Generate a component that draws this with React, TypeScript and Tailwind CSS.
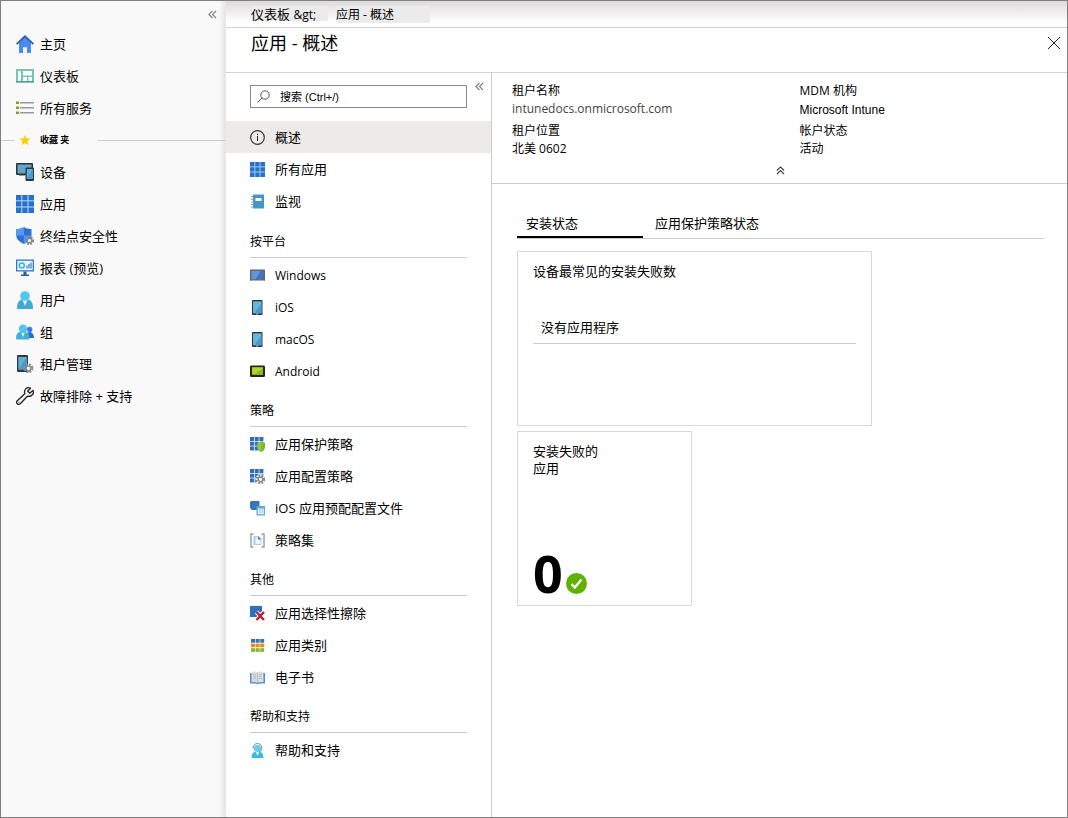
import { ReactNode } from 'react';

/* ---------- ICONS ---------- */

const GRID = [0, 1, 2];

const HomeIcon = () => (
    <svg viewBox="0 0 18 18" className="w-[18px] h-[18px]" aria-hidden="true">
        <path d="M3 7.5 9 2l6 5.5V18h-4v-5.5H7V18H3z" fill="#4a8ceb" />
        <path d="M9 0 0 8.6l1.2 1.2L9 2.6l7.8 7.2L18 8.6z" fill="#2560b0" />
        <path d="M7 12.5h4V18H7z" fill="#f0f0f0" />
    </svg>
);

const DashboardIcon = () => (
    <svg viewBox="0 0 18 18" className="w-[18px] h-[18px]" aria-hidden="true">
        <path d="M0 2h18v13.5H0z" fill="#76c5b2" />
        <path d="M0 14h18v1.5H0z" fill="#4e9f8e" />
        <path d="M2 4h3v10H2zM7 4h9v4.5H7zM7 10h4v4H7zM12.5 10H16v4h-3.5z" fill="#fff" />
    </svg>
);

const ListIcon = () => (
    <svg viewBox="0 0 18 18" className="w-[18px] h-[18px]" aria-hidden="true">
        <path d="M4 3h14v1.6H4zM4 8h14v1.6H4zM4 13h14v1.6H4z" fill="#999" />
        <path d="M0 2.4h3v2.7H0zM0 7.4h3v2.7H0zM0 12.4h3v2.7H0z" fill="#76a822" />
    </svg>
);

const StarIcon = () => (
    <svg viewBox="0 0 12 12" className="w-3 h-3" aria-hidden="true">
        <path d="M6 .5 7.5 4.4l4 .2-3.1 2.6 1 4.1L6 9.1 2.6 11.3l1-4.1L.5 4.6l4-.2z" fill="#fccf00" />
    </svg>
);

const DevicesIcon = () => (
    <svg viewBox="0 0 18 18" className="w-[18px] h-[18px]" aria-hidden="true">
        <rect x="0" y="0" width="17" height="12" rx="1" fill="#2f3236" />
        <path d="M1.5 1.5h14v9h-14z" fill="#63a4cf" />
        <path d="M3 12h6v1H3z" fill="#999" />
        <rect x="9.5" y="4.5" width="8.5" height="13.5" rx="1" fill="#2f3236" />
        <path d="M10.8 6h6v10h-6z" fill="#5fb3dc" />
        <path d="M16.8 6v10h-6z" fill="#4b9ccb" />
    </svg>
);

const GridIcon = ({ className }: { className: string }) => (
    <svg viewBox="0 0 18 18" className={className} aria-hidden="true">
        <path d="M0 0h18v18H0z" fill="#2672cb" />
        <path d="M5.8 0v18M12 0v18M0 5.8h18M0 12h18" stroke="#b8d8f5" />
    </svg>
);

const Gear = ({ x, y, r }: { x: number; y: number; r: number }) => (
    <g>
        <circle cx={x} cy={y} r={r} fill="none" stroke="#85898d" strokeWidth="2.2" strokeDasharray="1.8 1.2" />
        <circle cx={x} cy={y} r={r - 1.4} fill="#f8f8f8" stroke="#85898d" strokeWidth="1.4" />
    </g>
);

const ShieldIcon = () => (
    <svg viewBox="0 0 18 18" className="w-[18px] h-[18px]" aria-hidden="true">
        <path d="M8 0c2 1.5 4.5 2 7.5 2v6.5C15.5 12.5 12 15 8 17 4 15 .3 12.5.3 8.5V2C3.5 2 6 1.5 8 0z" fill="#2f6fd8" />
        <path d="M8 0v8.5H.3V2C3.5 2 6 1.5 8 0zM8 8.5h7.5C15.5 12.5 12 15 8 17z" fill="#5599f2" />
        <Gear x={13.5} y={13.5} r={3.6} />
    </svg>
);

const ReportIcon = () => (
    <svg viewBox="0 0 18 18" className="w-[18px] h-[18px]" aria-hidden="true">
        <path d="M0 .5h18v12H0z" fill="#2b78cf" />
        <path d="M1.3 1.8h15.4v9.4H1.3z" fill="#f1f8fe" />
        <circle cx="5.8" cy="6.5" r="2.5" fill="none" stroke="#35b6df" strokeWidth="1.6" />
        <path d="M11 6.5v3M13 5v4.5M15 3.5v6" stroke="#3c83d6" strokeWidth="1.3" />
        <path d="M7.5 12.5h3v3H13V17H5v-1.5h2.5z" fill="#255f9f" />
    </svg>
);

const UserIcon = () => (
    <svg viewBox="0 0 18 18" className="w-[18px] h-[18px]" aria-hidden="true">
        <path d="M1 17.5C1 12 3 9 6 8.5h6c3 .5 5 3.5 5 9 0 .5-.5.5-1 .5H2c-.5 0-1 0-1-.5z" fill="#41a9d3" />
        <path d="M6.5 9h5L9 15z" fill="#e3f5fb" />
        <circle cx="9" cy="5" r="4.8" fill="#50c7ea" />
    </svg>
);

const GroupIcon = () => (
    <svg viewBox="0 0 18 18" className="w-[18px] h-[18px]" aria-hidden="true">
        <path d="M10 15c0-4 1.5-6 3.5-6S18 11 18 15z" fill="#2b6bd0" />
        <circle cx="13.7" cy="6.5" r="2.7" fill="#3a7be0" />
        <path d="M0 15.500C0 11.500 1.500 9 4.500 9h5c3 .5 4 3 4 6.500 0 .6-.5 1-1 1H.5z" fill="#3fb0d8" />
        <path d="M5 9.5h4L7 14z" fill="#e3f5fb" />
        <circle cx="7" cy="5.7" r="4.2" fill="#50c7ea" />
    </svg>
);

const TenantIcon = () => (
    <svg viewBox="0 0 18 18" className="w-[18px] h-[18px]" aria-hidden="true">
        <rect x="1" y="0" width="11" height="17" rx="1" fill="#34383c" />
        <path d="M2.3 2h8.4v12.5H2.3z" fill="#61b0d6" />
        <path d="M10.7 2v12.5H2.3z" fill="#4d9ac6" />
        <Gear x={12.5} y={13.3} r={3.8} />
    </svg>
);

const WrenchIcon = () => (
    <svg viewBox="0 0 18 18" className="w-[18px] h-[18px]" aria-hidden="true">
        <path
            d="M16.8 3.4 13.9 6.2 11.7 4.2l2.800-3C12.3.2 10 1 9 3c-.6 1.300-.6 2.500-.2 3.700L1.300 13.800c-.9.9-.9 2.100-.1 2.900s2.100.8 3 0l7.200-7.500c1.300.3 2.700.2 3.900-.6C17.200 7.500 17.800 5.300 16.800 3.400z"
            fill="none"
            stroke="#222"
            strokeWidth="1.3"
            strokeLinejoin="round"
        />
        <circle cx="3" cy="15" r=".6" fill="#222" />
    </svg>
);

const InfoIcon = () => (
    <svg viewBox="0 0 15 15" className="w-[15px] h-[15px]" aria-hidden="true">
        <circle cx="7.5" cy="7.5" r="6.8" fill="none" stroke="#333" strokeWidth="1.2" />
        <path d="M7 6h1v5H7zM7 3.8h1V5H7z" fill="#222" />
    </svg>
);

const NotebookIcon = () => (
    <svg viewBox="0 0 15 15" className="w-[15px] h-[15px]" aria-hidden="true">
        <path d="M3 .5h11v14H3z" fill="#4496c8" />
        <path d="M1 2h3v1H1zM1 4.7h3v1H1zM1 7.400h3v1H1zM1 10.100h3v1H1zM1 12.600h3v1H1z" fill="#8d9ba5" />
        <path d="M5.5 4h6v3h-6z" fill="#fff" />
    </svg>
);

const MonitorIcon = () => (
    <svg viewBox="0 0 15 15" className="w-[15px] h-[15px]" aria-hidden="true">
        <rect x="0" y="1.5" width="15" height="11.5" rx=".6" fill="#63676c" />
        <path d="M1.5 3h12v8.3h-12z" fill="#3c78c2" />
        <path d="M1.5 3h9l-5 8.3h-4z" fill="#6398d4" />
        <path d="M.5 12h14v1H.5z" fill="#a9adb2" />
    </svg>
);

const PhoneIcon = () => (
    <svg viewBox="0 0 15 15" className="w-[15px] h-[15px]" aria-hidden="true">
        <rect x="2" y="0" width="10.5" height="15" rx=".8" fill="#2e3134" />
        <path d="M3 1.3h8.5v12H3z" fill="#68b6de" />
        <path d="M11.5 3v10.3H4z" fill="#4a9ccf" />
        <path d="M6 13.6h2.5v.8H6z" fill="#ddd" />
    </svg>
);

const AndroidIcon = () => (
    <svg viewBox="0 0 15 15" className="w-[15px] h-[15px]" aria-hidden="true">
        <rect x="0" y="1.5" width="15" height="11.5" rx="1.2" fill="#232619" />
        <path d="M2 3.2h11v7.5H2z" fill="#b0d527" />
        <path d="M13 4.5v6.2H4z" fill="#82b92d" />
    </svg>
);

const SmallGrid = () => (
    <g fill="#2f6fba">
        {GRID.map((row) =>
            GRID.map((col) => <rect key={`${row}-${col}`} x={col * 4.7} y={row * 4.7} width="4" height="4" />),
        )}
    </g>
);

const ProtectIcon = () => (
    <svg viewBox="0 0 15 15" className="w-[15px] h-[15px]" aria-hidden="true">
        <SmallGrid />
        <path d="M11.3 4.5c1.2.9 2.4 1.2 3.7 1.2V10c0 2.5-1.7 4-3.7 5-2-1-3.8-2.5-3.800-5V5.700c1.400 0 2.600-.3 3.800-1.200z" fill="#7db832" />
        <path d="M11.3 4.5V15c-2-1-3.800-2.500-3.800-5V5.700c1.400 0 2.600-.3 3.800-1.200z" fill="#91ca48" />
    </svg>
);

const ConfigIcon = () => (
    <svg viewBox="0 0 15 15" className="w-[15px] h-[15px]" aria-hidden="true">
        <SmallGrid />
        <circle cx="10.5" cy="10.3" r="5" fill="#fff" />
        <Gear x={10.5} y={10.3} r={3.7} />
    </svg>
);

const ProfileIcon = () => (
    <svg viewBox="0 0 15 15" className="w-[15px] h-[15px]" aria-hidden="true">
        <path d="M1 0h8.5v9H2L0 7V1z" fill="#3777b7" />
        <path d="M6.5 5H15v9.5H6.5z" fill="#5ea9d8" />
        <path d="M7.800 7.500h6v5.700h-6z" fill="#e8f4fb" />
        <path d="M8.800 8.800h4M8.800 11h4" stroke="#8cc3e6" />
    </svg>
);

const PolicySetIcon = () => (
    <svg viewBox="0 0 15 15" className="w-[15px] h-[15px]" aria-hidden="true">
        <path d="M3.5 1H1v13h2.5M11.5 1H14v13h-2.5" fill="none" stroke="#999da1" strokeWidth="1.4" />
        <path d="M3.5 3H9l2.5 2.5V12h-8z" fill="#a8ccf5" />
        <path d="M5.5 4.5h3l2 2V11h-5z" fill="#f3f8fe" />
        <path d="m8 3.5 3 3H8z" fill="#2f6fd0" />
    </svg>
);

const WipeIcon = () => (
    <svg viewBox="0 0 15 15" className="w-[15px] h-[15px]" aria-hidden="true">
        <path d="M0 0h12v11H0z" fill="#2d70bd" />
        <path d="m6.5 6 7.5 8M14 6l-7.5 8" stroke="#fff" strokeWidth="4.2" />
        <path d="m6.5 6 7.5 8M14 6l-7.5 8" stroke="#b4202c" strokeWidth="2.4" />
    </svg>
);

const CategoryIcon = () => (
    <svg viewBox="0 0 15 15" className="w-[15px] h-[15px]" aria-hidden="true">
        {GRID.map((col) => (
            <g key={col}>
                <rect x={1 + col * 4.6} y="1" width="4" height="3.7" fill="#3273bd" />
                <rect x={1 + col * 4.6} y="5.6" width="4" height="3.7" fill="#ef8b13" />
                <rect x={1 + col * 4.6} y="10.2" width="4" height="3.7" fill="#85b938" />
            </g>
        ))}
    </svg>
);

const BookIcon = () => (
    <svg viewBox="0 0 15 15" className="w-[15px] h-[15px]" aria-hidden="true">
        <path d="M0 3h15v10.5H9l-1.500 1-1.500-1H0z" fill="#4f8ed0" />
        <path d="M1.500 2c2.500-.7 4.500-.7 6 .5V13c-1.500-1.200-3.500-1.200-6-.5zM13.500 2c-2.500-.7-4.500-.7-6 .5V13c1.500-1.200 3.500-1.200 6-.5z" fill="#dcdde0" />
        <path d="M7.500 2.500V13M3 4.500h3M3 6.500h3M3 8.500h3M9 4.500h3M9 6.500h3M9 8.500h3" stroke="#b3b5ba" strokeWidth=".8" />
    </svg>
);

const SupportIcon = () => (
    <svg viewBox="0 0 15 15" className="w-[15px] h-[15px]" aria-hidden="true">
        <path d="M1.500 15c0-4 1.500-6 4-6.300h4c2.500.3 4 2.300 4 6.300z" fill="#3bb8dc" />
        <path d="M5.800 9h3.600l-1.800 4z" fill="#e3f5fb" />
        <circle cx="7.5" cy="5.5" r="3.6" fill="#5fd0ef" />
        <path d="M3.200 5.500C3 2 5 .6 7.500.6S12 2.200 11.900 5.500c0 1.700-1 2.800-2.600 3" fill="none" stroke="#7a8087" />
    </svg>
);

const DoubleChevron = ({ className }: { className: string }) => (
    <svg viewBox="0 0 10 10" className={className} fill="none" stroke="currentColor" strokeWidth="1.2" aria-hidden="true">
        <path d="M5 1 1 5l4 4M9 1 5 5l4 4" />
    </svg>
);

/* ---------- DATA ---------- */

type Item = { label: string; icon: ReactNode; latin?: boolean };

const mainLinks: Item[] = [
    { label: '主页', icon: <HomeIcon /> },
    { label: '仪表板', icon: <DashboardIcon /> },
    { label: '所有服务', icon: <ListIcon /> },
];

const favoriteLinks: Item[] = [
    { label: '设备', icon: <DevicesIcon /> },
    { label: '应用', icon: <GridIcon className="w-[18px] h-[18px]" /> },
    { label: '终结点安全性', icon: <ShieldIcon /> },
    { label: '报表 (预览)', icon: <ReportIcon /> },
    { label: '用户', icon: <UserIcon /> },
    { label: '组', icon: <GroupIcon /> },
    { label: '租户管理', icon: <TenantIcon /> },
    { label: '故障排除 + 支持', icon: <WrenchIcon /> },
];

const overviewLinks: Item[] = [
    { label: '概述', icon: <InfoIcon /> },
    { label: '所有应用', icon: <GridIcon className="w-[15px] h-[15px]" /> },
    { label: '监视', icon: <NotebookIcon /> },
];

const menuGroups: { title: string; items: Item[] }[] = [
    {
        title: '按平台',
        items: [
            { label: 'Windows', icon: <MonitorIcon />, latin: true },
            { label: 'iOS', icon: <PhoneIcon />, latin: true },
            { label: 'macOS', icon: <PhoneIcon />, latin: true },
            { label: 'Android', icon: <AndroidIcon />, latin: true },
        ],
    },
    {
        title: '策略',
        items: [
            { label: '应用保护策略', icon: <ProtectIcon /> },
            { label: '应用配置策略', icon: <ConfigIcon /> },
            { label: 'iOS 应用预配配置文件', icon: <ProfileIcon /> },
            { label: '策略集', icon: <PolicySetIcon /> },
        ],
    },
    {
        title: '其他',
        items: [
            { label: '应用选择性擦除', icon: <WipeIcon /> },
            { label: '应用类别', icon: <CategoryIcon /> },
            { label: '电子书', icon: <BookIcon /> },
        ],
    },
    {
        title: '帮助和支持',
        items: [{ label: '帮助和支持', icon: <SupportIcon /> }],
    },
];

/* ---------- SECTIONS ---------- */

const SidebarLink = ({ label, icon }: Item) => (
    <li>
        <a href="#" className="flex items-center gap-1.5 h-8 pl-[15px] hover:bg-[#ececec]">
            {icon}
            <span>{label}</span>
        </a>
    </li>
);

const Sidebar = () => (
    <nav
        aria-label="主导航"
        className="w-[225px] shrink-0 bg-[#f9f9f9] shadow-[inset_-7px_0_6px_-5px_rgba(0,0,0,0.12)]"
    >
        <div className="flex justify-end h-[27px] pr-2">
            <button type="button" aria-label="折叠菜单" className="w-3 h-[27px] flex items-center justify-center text-[#777]">
                <DoubleChevron className="w-[9px] h-[9px]" />
            </button>
        </div>
        <ul>
            {mainLinks.map((item) => (
                <SidebarLink key={item.label} {...item} />
            ))}
        </ul>
        <div className="flex items-center h-8">
            <div className="w-[13px] h-px bg-[#ccc]"></div>
            <div className="w-[26px] flex justify-center pr-1">
                <StarIcon />
            </div>
            <h2 className="w-[58px] text-[9px] font-bold">收藏 夹</h2>
            <div className="flex-1 h-px bg-[#ccc]"></div>
        </div>
        <ul>
            {favoriteLinks.map((item) => (
                <SidebarLink key={item.label} {...item} />
            ))}
        </ul>
    </nav>
);

const MenuLink = ({ label, icon, latin = false, active = false }: Item & { active?: boolean }) => (
    <li>
        <a
            href="#"
            aria-current={active ? 'page' : undefined}
            className={`flex items-center gap-2.5 h-8 pl-6 ${active ? 'bg-[#edebe9]' : 'hover:bg-[#f3f2f1]'}`}
        >
            {icon}
            <span className={latin ? 'pt-0.5 text-xs' : ''}>{label}</span>
        </a>
    </li>
);

const AppMenu = () => (
    <nav aria-label="应用" className="w-[266px] shrink-0 border-r border-[#ccc]">
        <div className="flex pt-3 pl-6 pb-[13px]">
            <label className="flex items-center w-[217px] h-[23px] border border-[#8a8886] pl-1.5">
                <svg viewBox="0 0 13 13" className="w-[13px] h-[13px] shrink-0" fill="none" stroke="#555" aria-hidden="true">
                    <circle cx="8" cy="5" r="4.2" />
                    <path d="M5 8 .5 12.500" />
                </svg>
                <input
                    type="search"
                    aria-label="搜索"
                    placeholder="搜索 (Ctrl+/)"
                    className="w-full min-w-0 pl-2.5 text-[11px] font-['Liberation_Sans','Noto_Sans_CJK_SC',sans-serif] outline-none placeholder:text-black placeholder:opacity-100"
                />
            </label>
            <button type="button" aria-label="折叠" className="w-6 h-[3px] flex items-center justify-center text-[#777]">
                <DoubleChevron className="w-[9px] h-[9px]" />
            </button>
        </div>
        <ul className="pb-px">
            {overviewLinks.map((item, i) => (
                <MenuLink key={item.label} {...item} active={i === 0} />
            ))}
        </ul>
        {menuGroups.map((group) => (
            <section key={group.title}>
                <h2 className="flex items-center h-[33px] mx-6 mt-[7px] mb-px pt-0.5 text-xs border-b border-[#ccc]">
                    {group.title}
                </h2>
                <ul>
                    {group.items.map((item) => (
                        <MenuLink key={item.label} {...item} />
                    ))}
                </ul>
            </section>
        ))}
    </nav>
);

const Essentials = () => (
    <section aria-label="概要" className="border-b border-[#ccc] pt-[9px] text-xs leading-[18px]">
        <dl className="grid grid-cols-2 gap-y-1">
            <div className="pl-5">
                <dt>租户名称</dt>
                <dd className="text-[#444]">intunedocs.onmicrosoft.com</dd>
            </div>
            <div className="pl-5">
                <dt>MDM 机构</dt>
                <dd className="pt-0.5 leading-4 font-['Liberation_Sans','Noto_Sans_CJK_SC',sans-serif]">Microsoft Intune</dd>
            </div>
            <div className="pl-5">
                <dt>租户位置</dt>
                <dd>北美 0602</dd>
            </div>
            <div className="pl-5">
                <dt>帐户状态</dt>
                <dd>活动</dd>
            </div>
        </dl>
        <div className="flex justify-center h-[25px] pl-0.5">
            <button type="button" aria-label="收起概要" className="flex items-center h-[25px] px-2 text-[#333]">
                <DoubleChevron className="w-[9px] h-[9px] rotate-90" />
            </button>
        </div>
    </section>
);

const StatusTabs = () => (
    <div role="tablist" className="flex mr-[23px] border-b border-[#ccc]">
        <button
            type="button"
            role="tab"
            aria-selected="true"
            className="w-[126px] h-[29px] pl-[9px] text-left border-b-2 border-black"
        >
            安装状态
        </button>
        <button type="button" role="tab" aria-selected="false" className="h-[29px] px-3 pb-px text-left">
            应用保护策略状态
        </button>
    </div>
);

const Overview = () => (
    <main className="flex-1 min-w-0">
        <Essentials />
        <div className="pt-[25px] pl-[25px]">
            <StatusTabs />
            <section className="w-[355px] h-[175px] mt-3 px-[15px] pt-[9px] border border-[#d9d9d9]">
                <h3 className="leading-5">设备最常见的安装失败数</h3>
                <p className="mt-9 px-2 pb-1.5 leading-5 border-b border-[#ccc]">没有应用程序</p>
            </section>
            <section className="flex flex-col justify-between w-[175px] h-[175px] mt-[5px] px-[15px] py-[11px] border border-[#d9d9d9]">
                <h3 className="leading-[17px]">
                    安装失败的
                    <br />
                    应用
                </h3>
                <div className="flex items-end gap-[3px]">
                    <span className="text-[52px] leading-[42px] font-bold">0</span>
                    <svg viewBox="0 0 21 21" className="w-[21px] h-[21px]" aria-hidden="true">
                        <circle cx="10.5" cy="10.5" r="10.5" fill="#5fb200" />
                        <path d="m5.500 11 3.300 3.500 6.700-8" fill="none" stroke="#fff" strokeWidth="2.4" />
                    </svg>
                </div>
            </section>
        </div>
    </main>
);

export default function App() {
    return (
        <div className="flex min-h-screen bg-white border border-[#808080] text-black text-[13px] leading-5 font-['Open_Sans','Noto_Sans_CJK_SC',sans-serif]">
            <Sidebar />
            <div className="flex flex-col flex-1 min-w-0">
                {/* Breadcrumb */}
                <nav
                    aria-label="痕迹导航"
                    className="flex items-start gap-2 h-[27px] pt-[5px] pl-[25px] border-b border-[#d2d2d2] bg-linear-to-b from-[#dcdadb] to-white to-80%"
                >
                    <a href="#" className="w-[77px] h-[15px] leading-4 bg-[#ebebeb]">
                        仪表板 <span className="text-xs leading-4">&amp;gt;</span>
                    </a>
                    <a href="#" className="w-[94px] h-[17px] text-xs leading-[17px] bg-[#ebebeb]">
                        应用 - 概述
                    </a>
                </nav>

                {/* Title */}
                <header className="flex items-center justify-between h-[45px] pl-[25px] pr-[7px] pb-3.5 border-b border-[#d2d2d2]">
                    <h1 className="text-lg leading-6">应用 - 概述</h1>
                    <button type="button" aria-label="关闭">
                        <svg viewBox="0 0 12 12" className="w-3 h-3" stroke="#222" aria-hidden="true">
                            <path d="m0 0 12 12M12 0 0 12" />
                        </svg>
                    </button>
                </header>

                <div className="flex flex-1">
                    <AppMenu />
                    <Overview />
                </div>
            </div>
        </div>
    );
}
